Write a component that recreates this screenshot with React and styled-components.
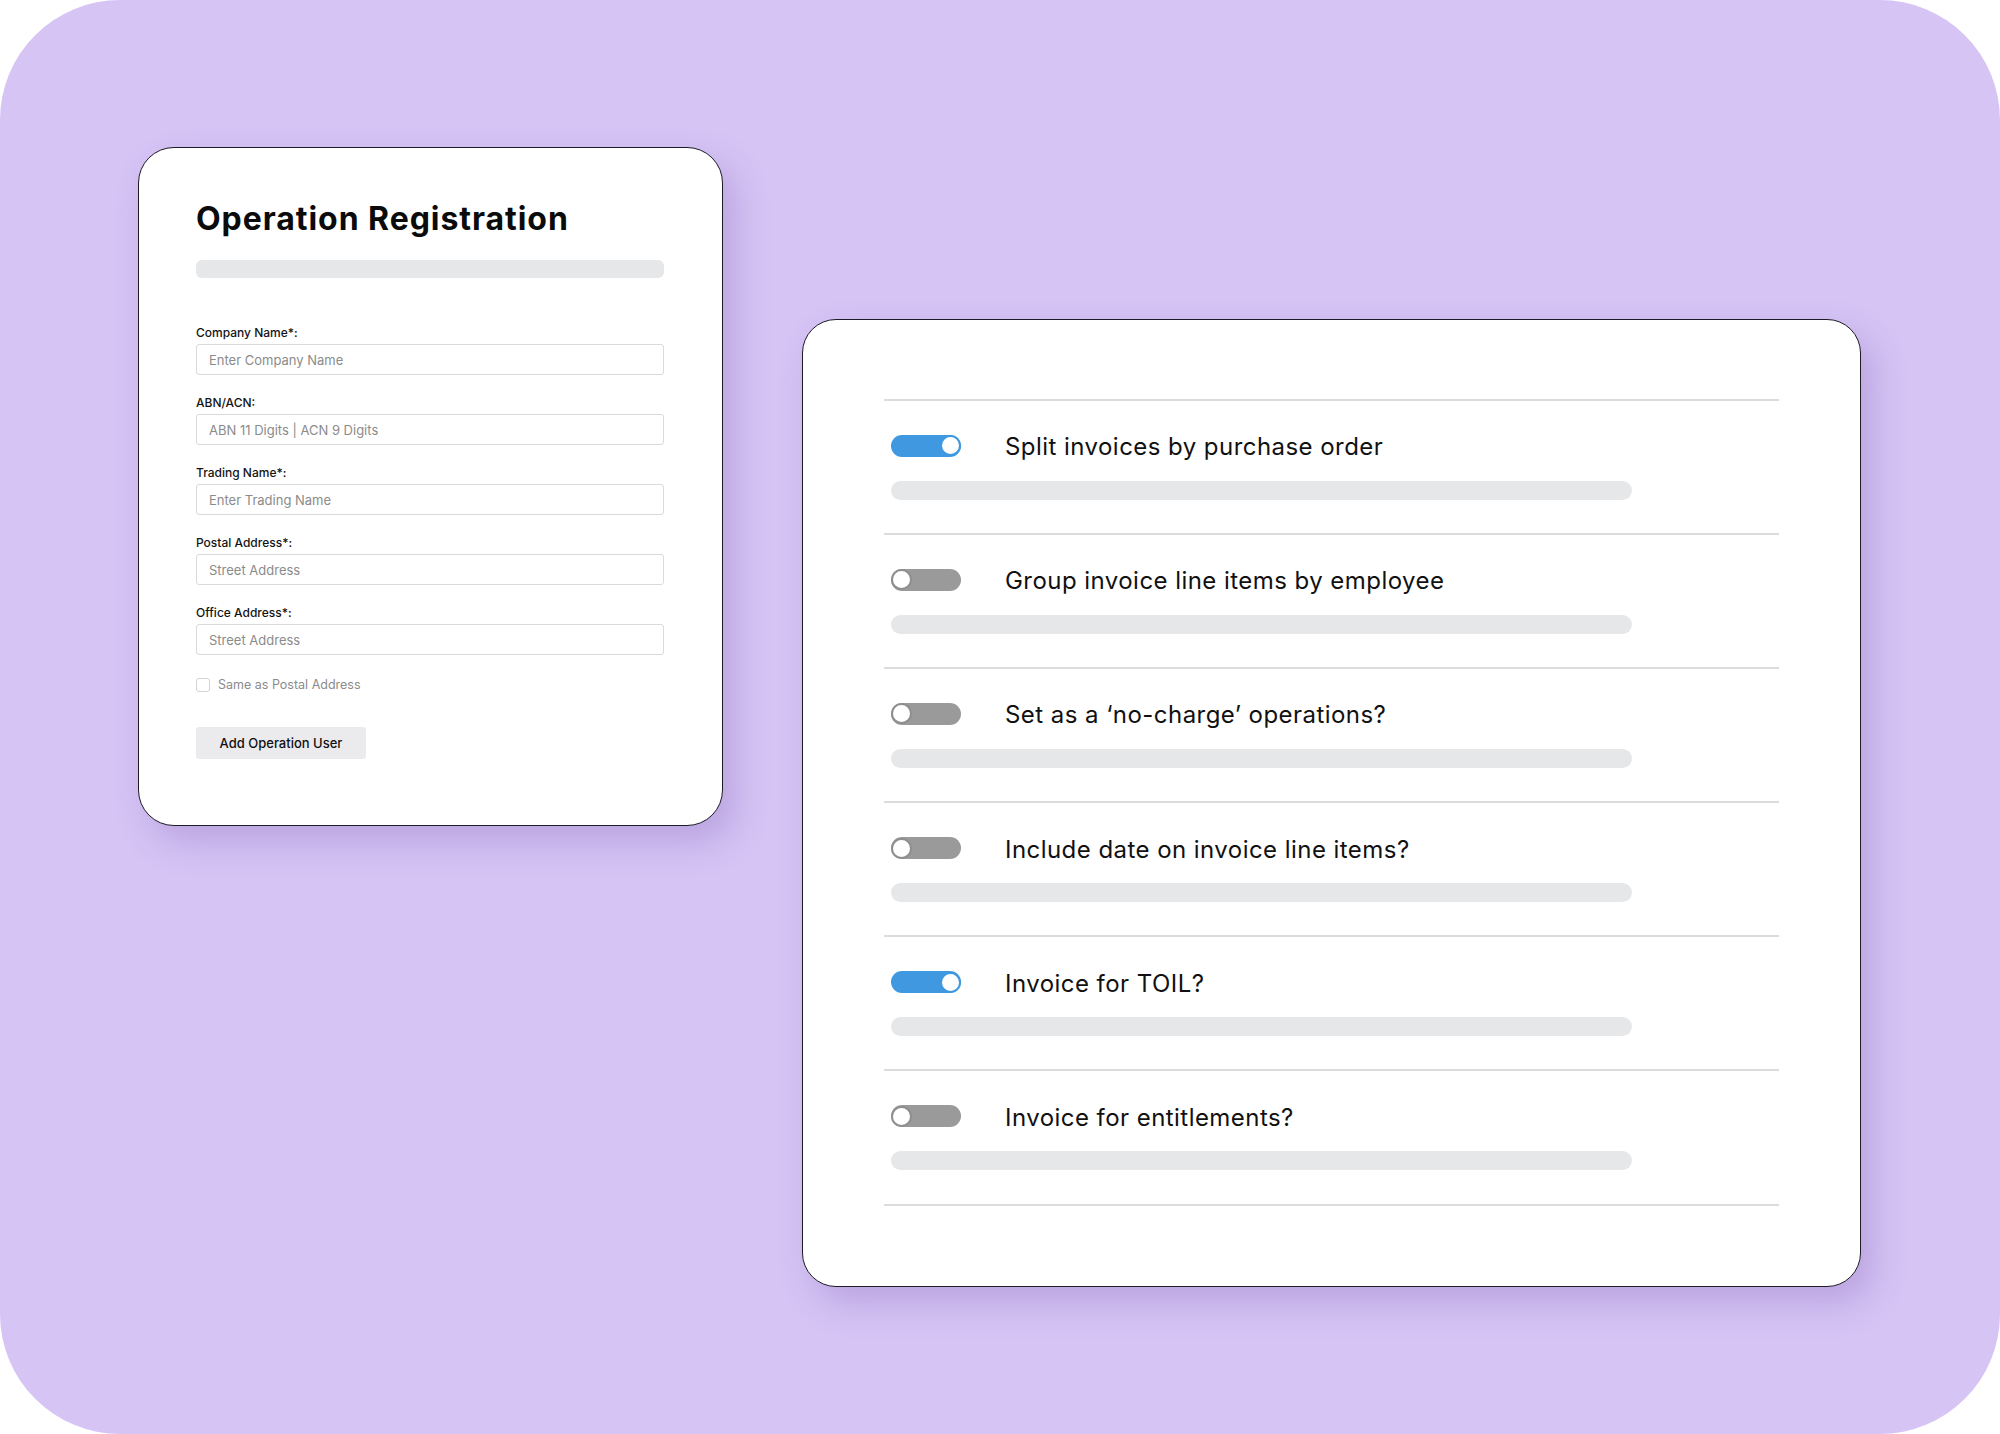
import React from "react";
import styled, { createGlobalStyle } from "styled-components";

const Global = createGlobalStyle`
  html, body { margin: 0; padding: 0; background: #ffffff; }
  body { font-family: Inter, "Noto Sans", Arial, sans-serif; -webkit-font-smoothing: antialiased; }
  * { box-sizing: border-box; }
`;

const Frame = styled.div`
  width: 2000px;
  height: 1434px;
  background: #d6c4f5;
  border-radius: 120px;
  padding: 147px 0 0 138px;
  display: flex;
  align-items: flex-start;
  gap: 79px;
  overflow: hidden;
`;

const Card = styled.section`
  background: #ffffff;
  border: 1.5px solid #1d1b24;
  box-shadow: 12px 16px 34px rgba(102, 72, 160, 0.25);
`;

const FormCard = styled(Card)`
  width: 585px;
  border-radius: 36px;
  padding: 51px 58px 66px 57px;
`;

const Title = styled.h1`
  margin: 0;
  font-size: 32px;
  line-height: 39px;
  font-weight: 700;
  color: #0b0b0b;
  letter-spacing: 0.95px;
`;

const Skeleton = styled.div`
  height: ${(p) => p.$h}px;
  width: ${(p) => p.$w};
  border-radius: ${(p) => p.$r}px;
  background: #e6e7e9;
  margin-top: ${(p) => p.$mt || 0}px;
`;

const Fields = styled.div`
  margin-top: 47px;
  display: flex;
  flex-direction: column;
  gap: 20px;
`;

const Field = styled.label`
  display: flex;
  flex-direction: column;
  gap: 4px;
`;

const LabelText = styled.span`
  font-size: 12px;
  line-height: 15px;
  font-weight: 500;
  color: #141414;
`;

const Input = styled.input`
  height: 31px;
  width: 100%;
  border: 1.5px solid #dadada;
  border-radius: 3px;
  padding: 0 12px;
  font-family: inherit;
  font-size: 13px;
  color: #222;
  background: #fff;
  outline: none;
  &::placeholder { color: #8b8b8b; }
`;

const CheckRow = styled.div`
  margin-top: 22px;
  display: flex;
  align-items: center;
  gap: 8px;
  line-height: 16px;
`;

const CheckBox = styled.span`
  width: 14px;
  height: 14px;
  border: 1.5px solid #d3d3d3;
  border-radius: 3px;
  background: #fff;
`;

const CheckText = styled.span`
  font-size: 12.5px;
  color: #8b8b8b;
`;

const Button = styled.button`
  margin-top: 34px;
  width: 170px;
  height: 32px;
  border: none;
  border-radius: 3px;
  background: #ebebee;
  font-family: inherit;
  font-size: 13px;
  font-weight: 500;
  color: #111;
  display: block;
`;

const SettingsCard = styled(Card)`
  margin-top: 172px;
  width: 1059px;
  border-radius: 34px;
  padding: 78.5px 81px 80px;
`;

const List = styled.div`
  border-top: 2px solid #dcdcdc;
`;

const Row = styled.div`
  border-bottom: 2px solid #dcdcdc;
  padding: 31px 0 33.2px 7px;
  display: flex;
  flex-direction: column;
  gap: 21px;
`;

const RowHead = styled.div`
  height: 28px;
  display: flex;
  align-items: center;
  gap: 44px;
`;

const Track = styled.span`
  width: 70px;
  height: 22px;
  border-radius: 11px;
  background: ${(p) => (p.$on ? "#3f98e0" : "#9a9a9a")};
  display: flex;
  align-items: center;
  justify-content: ${(p) => (p.$on ? "flex-end" : "flex-start")};
  flex-shrink: 0;
`;

const Knob = styled.span`
  width: 21px;
  height: 21px;
  border-radius: 50%;
  background: #fff;
  border: 2px solid ${(p) => (p.$on ? "#3f98e0" : "#8e8e8e")};
`;

const RowLabel = styled.span`
  font-size: 24px;
  line-height: 28px;
  color: #111;
  letter-spacing: 0.45px;
  padding-top: 3px;
`;

const fields = [
  ["Company Name*:", "Enter Company Name"],
  ["ABN/ACN:", "ABN 11 Digits | ACN 9 Digits"],
  ["Trading Name*:", "Enter Trading Name"],
  ["Postal Address*:", "Street Address"],
  ["Office Address*:", "Street Address"],
];

const settings = [
  ["Split invoices by purchase order", true],
  ["Group invoice line items by employee", false],
  ["Set as a \u2018no-charge\u2019 operations?", false],
  ["Include date on invoice line items?", false],
  ["Invoice for TOIL?", true],
  ["Invoice for entitlements?", false],
];

export default function App() {
  return (
    <>
      <Global />
      <Frame>
        <FormCard>
          <Title>Operation Registration</Title>
          <Skeleton $h={18} $w="100%" $r={6} $mt={22} />
          <Fields>
            {fields.map(([label, ph]) => (
              <Field key={label}>
                <LabelText>{label}</LabelText>
                <Input placeholder={ph} />
              </Field>
            ))}
          </Fields>
          <CheckRow>
            <CheckBox />
            <CheckText>Same as Postal Address</CheckText>
          </CheckRow>
          <Button>Add Operation User</Button>
        </FormCard>
        <SettingsCard>
          <List>
            {settings.map(([label, on]) => (
              <Row key={label}>
                <RowHead>
                  <Track $on={on}>
                    <Knob $on={on} />
                  </Track>
                  <RowLabel>{label}</RowLabel>
                </RowHead>
                <Skeleton $h={19} $w="741px" $r={10} />
              </Row>
            ))}
          </List>
        </SettingsCard>
      </Frame>
    </>
  );
}
